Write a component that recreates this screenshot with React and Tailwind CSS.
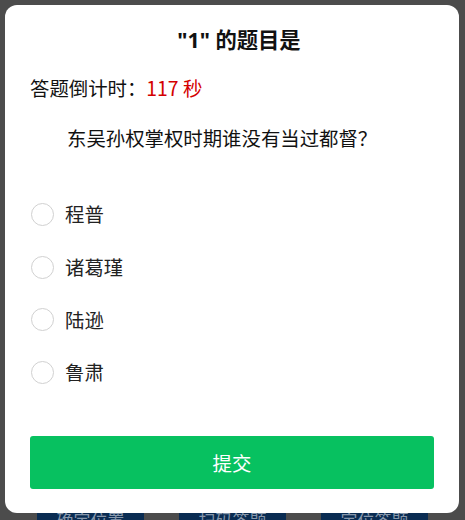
import React, { useState } from 'react';

const options = ['程普', '诸葛瑾', '陆逊', '鲁肃'];

const App = () => {
  const [picked, setPicked] = useState(null);

  return (
    <div
      className="relative w-[465px] h-[520px] overflow-hidden bg-[#4c4c4c]"
      style={{ fontFamily: '"Noto Sans CJK SC", "Noto Sans", sans-serif' }}
    >
      {/* page behind the mask */}
      <div className="flex justify-between px-[37px] pt-[500px]">
        {['确定位置', '扫码答题', '定位答题'].map((t) => (
          <div key={t} className="w-[107px] h-[40px] rounded-md bg-[#0a2c52] text-[#8797ab] text-[17px] leading-[40px] text-center">
            {t}
          </div>
        ))}
      </div>

      {/* dialog */}
      <div className="absolute left-[5px] top-[5px] w-[454px] rounded-[12px] bg-white px-[25px] pt-[21px] pb-[24px] text-[#111]">
        <h2
          className="pl-[14px] text-center text-[21.3px] leading-[28px] font-bold"
          style={{ fontFamily: '"Noto Sans", "Noto Sans CJK SC", sans-serif' }}
        >
          "1" 的题目是
        </h2>

        <p className="mt-[21px] text-[19.4px] leading-[26px]">
          答题倒计时：<span className="text-[#d40000]">117 秒</span>
        </p>

        <p className="mt-[24px] text-[19.4px] leading-[26px] indent-[37px]">东吴孙权掌权时期谁没有当过都督？</p>

        <div className="mt-[37px] flex flex-col">
          {options.map((o, i) => (
            <label key={o} className="flex h-[52.7px] items-center gap-[11px] cursor-pointer" onClick={() => setPicked(i)}>
              <span
                className={
                  picked === i
                    ? 'ml-px w-[23px] h-[23px] rounded-full border border-[#07c160] bg-[#07c160]'
                    : 'ml-px w-[23px] h-[23px] rounded-full border border-[#d1d1d1] bg-white'
                }
              ></span>
              <span className="text-[19.4px] leading-[26px] text-[#222]">{o}</span>
            </label>
          ))}
        </div>

        <button className="mt-[37px] w-full h-[53px] rounded-[3px] bg-[#07c160] text-white text-[19.4px]">提交</button>
      </div>
    </div>
  );
};

export default App;
